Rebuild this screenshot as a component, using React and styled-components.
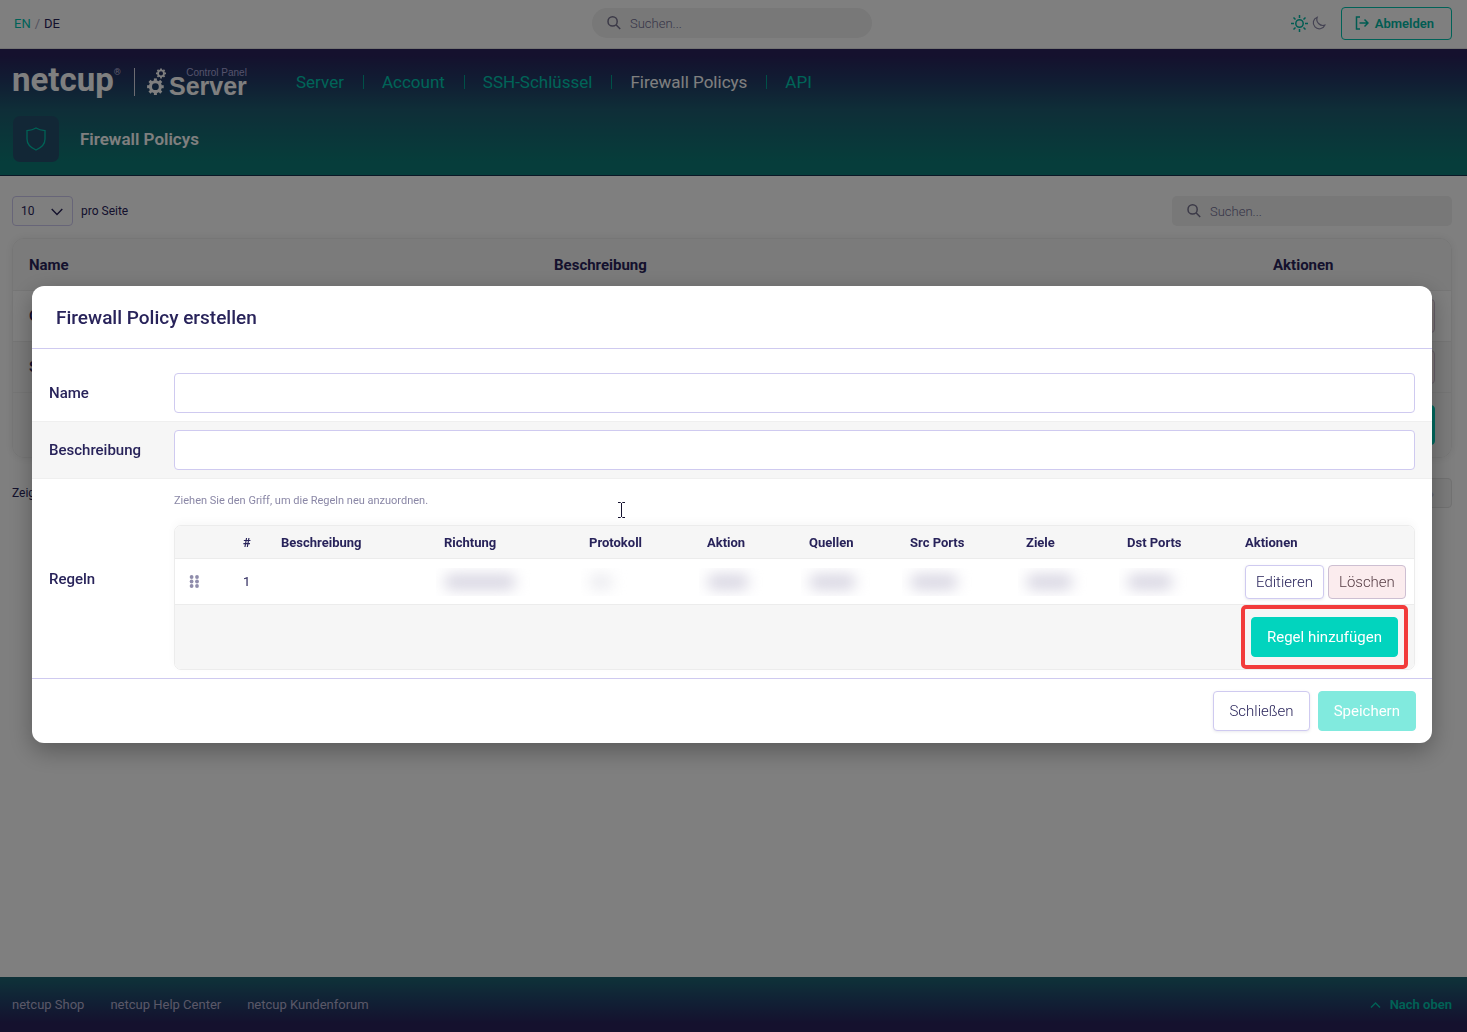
import React from 'react'
import styled, { createGlobalStyle } from 'styled-components'

const GlobalStyle = createGlobalStyle`
* { box-sizing: border-box; }

body {
  margin: 0;
  background: #fff;
  color: #28235a;
  font-family: Roboto, "Liberation Sans", sans-serif;
  font-size: 15px;
}

button, input, select { font-family: inherit; color: inherit; }
a { text-decoration: none; color: inherit; }
p, h1, h2 { margin: 0; }
`

const Page = styled.div`
  min-height: 100vh;
  display: flex;
  flex-direction: column;
`

const TopBar = styled.div`
  height: 49px;
  padding: 0 15px 2px 12px;
  border-bottom: 1px solid #e4e4e4;
  display: grid;
  grid-template-columns: 1fr 280px 1fr;
  align-items: center;
`

const Languages = styled.div`
  padding-left: 2px;
  display: flex;
  gap: 4px;
  font-size: 13px;
  color: #a6a3bd;
`

const Language = styled.a`
  color: ${props => props.$current ? '#28235a' : '#00c4b0'};
`

const SearchField = styled.label`
  width: 280px;
  height: 30px;
  padding: 0 15px;
  display: flex;
  align-items: center;
  gap: 9px;
  background: #f0f0f0;
  border-radius: ${props => props.$round ? '15px' : '5px'};
`

const SearchInput = styled.input`
  flex: 1;
  min-width: 0;
  padding: 0;
  border: 0;
  background: none;
  font-size: 13px;
  font-weight: 300;

  &::placeholder {
    color: #6f6b90;
    opacity: 1;
  }
`

const TopActions = styled.div`
  display: flex;
  justify-content: flex-end;
  align-items: center;
  gap: 4px;
`

const LogoutButton = styled.button`
  height: 33px;
  margin-left: 11px;
  padding: 0 17px 0 13px;
  display: flex;
  align-items: center;
  gap: 6px;
  background: none;
  border: 1px solid #00c4b0;
  border-radius: 4px;
  color: #00b8a5;
  font-size: 13px;
  font-weight: 600;
`

const Header = styled.header`
  height: 127px;
  padding: 0 12px;
  background: linear-gradient(#2a225c 5%, #223a66 25%, #1e5c70 48%, #0c7b76 90%);
  border-bottom: 1px solid #14304c;
`

const NavRow = styled.div`
  height: 66px;
  display: flex;
  align-items: center;
`

const Brand = styled.div`
  width: 265px;
  display: flex;
  align-items: center;
  color: #fff;
`

const BrandName = styled.span`
  width: 123px;
  height: 28px;
  border-right: 1px solid #d8d8e4;
  display: flex;
  font-size: 33px;
  line-height: 24px;
  font-weight: 700;

  sup {
    font-size: 9px;
    line-height: 8px;
    font-weight: 400;
    color: #b9b6dc;
  }
`

const Product = styled.span`
  margin-left: 12px;
  display: flex;
  align-items: center;
  font-family: "Liberation Sans", Arial, sans-serif;
`

const ProductText = styled.span`
  margin-left: 3px;
  display: flex;
  flex-direction: column;
  align-items: flex-end;
`

const ProductSmall = styled.span`
  font-size: 10px;
  line-height: 8px;
  color: #a9a6d8;
`

const ProductLarge = styled.span`
  font-size: 25px;
  line-height: 18px;
  font-weight: 700;
`

const Nav = styled.nav`
  display: flex;
  align-items: center;
`

const NavLink = styled.a`
  padding: 0 19px 0 18px;
  border-left: 1px solid ${props => props.$first ? 'transparent' : '#00a391'};
  line-height: 14px;
  font-size: 17px;
  color: ${props => props.$active ? '#fff' : '#00c9b0'};
`

const TitleRow = styled.div`
  display: flex;
  align-items: center;
  gap: 21px;
  margin-top: 1px;
  padding-left: 1px;
`

const TitleIcon = styled.div`
  width: 46px;
  height: 46px;
  border-radius: 7px;
  background: #244f6c;
  display: flex;
  align-items: center;
  justify-content: center;
`

const PageTitle = styled.h1`
  color: #fff;
  font-size: 17px;
  font-weight: 600;
`

const Main = styled.main`
  flex: 1;
  padding: 20px 15px 0 12px;
`

const Bar = styled.div`
  display: flex;
  align-items: center;
  justify-content: space-between;
  font-size: 12px;
`

const PageSize = styled.label`
  display: flex;
  align-items: center;
  gap: 8px;
`

const SelectBox = styled.span`
  position: relative;
  display: flex;

  svg {
    position: absolute;
    right: 10px;
    top: 12px;
    pointer-events: none;
  }
`

const Select = styled.select`
  appearance: none;
  width: 61px;
  height: 30px;
  padding: 0 8px;
  background: #fff;
  border: 1px solid #cfcaf0;
  border-radius: 4px;
  font-size: 12px;
`

const PolicyTable = styled.table`
  width: 100%;
  margin: 12px 0 20px;
  table-layout: fixed;
  border-collapse: separate;
  border-spacing: 0;
  border: 1px solid #ececec;
  border-radius: 12px;
  box-shadow: 0 0 10px rgba(0, 0, 0, 0.08);
  overflow: hidden;

  th, td {
    padding: 8px 16px;
    text-align: left;
    font-weight: 600;
    border-bottom: 1px solid #ececec;
  }
  th { height: 52px; font-weight: 700; }
  thead tr, tbody tr:nth-child(2n), tfoot tr { background: #f6f6f6; }
  tfoot td { padding: 12px 16px; border-bottom: 0; }
`

const Right = styled.div`
  display: flex;
  justify-content: flex-end;
`

const PagerButton = styled.button`
  width: 40px;
  height: 30px;
  background: #f6f6f6;
  border: 1px solid #e4e4e4;
  border-radius: 4px;
  color: #c8c6d6;
  font-size: 16px;
`

const Footer = styled.footer`
  height: 55px;
  padding: 0 15px 0 12px;
  display: flex;
  align-items: center;
  gap: 26px;
  background: linear-gradient(#1e6673, #22416a 45%, #2a225c 85%);
  color: #b4b0d0;
  font-size: 13px;
`

const TopLink = styled.a`
  margin-left: auto;
  display: flex;
  align-items: center;
  gap: 9px;
  color: #00c4ac;
  font-weight: 600;
`

const Backdrop = styled.div`
  position: fixed;
  inset: 0;
  padding: 0 35px 3px 32px;
  display: flex;
  align-items: center;
  background: rgba(0, 0, 0, 0.5);
`

const Modal = styled.section`
  flex: 1;
  background: #fff;
  border-radius: 12px;
  box-shadow: 0 8px 24px rgba(0, 0, 0, 0.3);
`

const ModalHeader = styled.div`
  height: 63px;
  padding: 0 24px;
  display: flex;
  align-items: center;
  border-bottom: 1px solid #cfcaf0;
`

const ModalTitle = styled.h2`
  font-size: 19px;
  font-weight: 500;
`

const Form = styled.form`
  margin-top: 16px;
`

const FormRow = styled.div`
  padding: 8px 17px;
  display: grid;
  grid-template-columns: 125px 1fr;
  align-items: center;
  background: ${props => props.$shaded ? '#f6f6f6' : '#fff'};
  border-bottom: ${props => props.$last ? '0' : '1px solid #efefef'};
`

const labelStyle = `
  font-size: 15px;
  font-weight: 500;
`

const Label = styled.label`${labelStyle}`
const GroupLabel = styled.span`${labelStyle}`

const Input = styled.input`
  width: 100%;
  height: 40px;
  padding: 0 12px;
  background: #fff;
  border: 1px solid #cfcaf0;
  border-radius: 4px;
  font-size: 15px;
`

const Hint = styled.p`
  margin-bottom: 10px;
  font-size: 11px;
  line-height: 28px;
  color: #8a87a6;
`

const RuleTable = styled.table`
  width: 100%;
  table-layout: fixed;
  border-collapse: separate;
  border-spacing: 0;
  border: 1px solid #ececec;
  border-radius: 7px;
  box-shadow: 0 -3px 8px rgba(0, 0, 0, 0.03);
  overflow: hidden;
  font-size: 13px;

  th, td {
    padding: 0 8px;
    text-align: left;
    border-bottom: 1px solid #ececec;
  }
  th { height: 33px; font-weight: 700; }
  td { height: 46px; }
  thead, tfoot { background: #f6f6f6; }
  tfoot td { height: 64px; padding: 0 6px; border-bottom: 0; }
`

const Handle = styled.svg`
  display: block;
  margin-left: 6px;
  fill: #8f8cab;
`

const Masked = styled.div`
  height: 28px;
  margin: 0 -8px;
  padding: 6px 8px;
  overflow: hidden;

  &::before {
    content: "";
    display: block;
    width: ${props => props.$width};
    height: 16px;
    border-radius: 8px;
    background: ${props => props.$faint ? '#ececf0' : '#d9d7e3'};
    filter: blur(7px);
  }
`

const RowActions = styled.div`
  display: flex;
  gap: 4px;
`

const Button = styled.button`
  flex: none;
  height: ${props => props.$small ? '34px' : '40px'};
  padding: 0 ${props => props.$small ? '10px' : '15px'};
  background: #fff;
  border: 1px solid #cfcaf0;
  border-radius: 4px;
  box-shadow: 0 1px 3px rgba(40, 35, 90, 0.1);
  font-size: 15px;
  font-weight: 300;
  color: #28235a;
`

const DangerButton = styled(Button)`
  background: #fbecee;
  border-color: #cdbfd2;
  box-shadow: none;
  color: #553c44;
`

const PrimaryButton = styled(Button)`
  background: #02d4be;
  border-color: #02d4be;
  box-shadow: none;
  color: #fff;
  font-weight: 400;

  &:disabled {
    background: #81eade;
    border-color: #81eade;
  }
`

const Highlight = styled.div`
  height: 64px;
  padding: 8px 6px;
  border: 4px solid #f23b3b;
  border-radius: 5px;
`

const ModalFooter = styled.div`
  padding: 12px 16px;
  display: flex;
  justify-content: flex-end;
  gap: 8px;
  border-top: 1px solid #cfcaf0;
`

const Pointer = styled.svg`
  position: absolute;
  left: 617px;
  top: 502px;
`

const SearchIcon = () => (
  <svg width="14" height="14" viewBox="0 0 14 14" fill="none" stroke="#77738f" strokeWidth="1.5">
    <circle cx="5.6" cy="5.4" r="4.6" />
    <path d="M9 8.8 L13.2 13" />
  </svg>
)

const Gear = ({ x, y, r }) => (
  <g transform={`translate(${x} ${y}) scale(${r})`} fill="none" stroke="#fff">
    <circle r="0.6" strokeWidth="0.38" />
    {[0, 45, 90, 135, 180, 225, 270, 315].map(angle => (
      <path key={angle} d="M0 -0.7 V-1" strokeWidth="0.36" transform={`rotate(${angle})`} />
    ))}
  </g>
)

const navItems = ['Server', 'Account', 'SSH-Schlüssel', 'Firewall Policys', 'API']
const footerLinks = ['netcup Shop', 'netcup Help Center', 'netcup Kundenforum']

const ruleColumns = [
  { title: '', width: 60 },
  { title: '#', width: 38 },
  { title: 'Beschreibung', width: 163 },
  { title: 'Richtung', width: 145 },
  { title: 'Protokoll', width: 118 },
  { title: 'Aktion', width: 102 },
  { title: 'Quellen', width: 101 },
  { title: 'Src Ports', width: 116 },
  { title: 'Ziele', width: 101 },
  { title: 'Dst Ports', width: 118 },
  { title: 'Aktionen', width: 177 },
]

const maskedWidths = ['72px', '24px', '42px', '47px', '48px', '47px', '46px']

const Background = () => (
  <Page>
    <TopBar>
      <Languages>
        <Language href="#en">EN</Language>/<Language href="#de" $current>DE</Language>
      </Languages>
      <SearchField $round>
        <SearchIcon />
        <SearchInput type="search" placeholder="Suchen..." aria-label="Suchen" />
      </SearchField>
      <TopActions>
        <svg width="17" height="17" viewBox="0 0 17 17" fill="none" stroke="#00b8a5" strokeWidth="1.5">
          <circle cx="8.5" cy="8.5" r="3.7" />
          <path d="M8.5 0v3M8.5 14v3M0 8.5h3M14 8.5h3M2.5 2.5l2 2M12.5 12.5l2 2M2.5 14.5l2-2M12.5 4.5l2-2" />
        </svg>
        <svg width="14" height="14" viewBox="0 0 14 14" fill="none" stroke="#8a87a6" strokeWidth="1.2">
          <path d="M5.2 1.2A6 6 0 1 0 12.8 9.2 6.2 6.2 0 0 1 5.2 1.2Z" />
        </svg>
        <LogoutButton type="button">
          <svg width="14" height="14" viewBox="0 0 14 14" fill="none" stroke="currentColor" strokeWidth="1.5">
            <path d="M5 1H1.5V13H5M4.5 7H13M9.5 3.5L13 7L9.5 10.5" />
          </svg>
          Abmelden
        </LogoutButton>
      </TopActions>
    </TopBar>

    <Header>
      <NavRow>
        <Brand>
          <BrandName>netcup<sup>®</sup></BrandName>
          <Product>
            <svg width="19" height="28" viewBox="0 0 19 28">
              <Gear x={8.4} y={18.7} r={8.3} />
              <Gear x={14} y={5.4} r={5} />
            </svg>
            <ProductText>
              <ProductSmall>Control Panel</ProductSmall>
              <ProductLarge>Server</ProductLarge>
            </ProductText>
          </Product>
        </Brand>
        <Nav>
          {navItems.map((item, i) => (
            <NavLink key={item} href="#nav" $first={i === 0} $active={item === 'Firewall Policys'}>
              {item}
            </NavLink>
          ))}
        </Nav>
      </NavRow>
      <TitleRow>
        <TitleIcon>
          <svg width="20" height="24" viewBox="0 0 20 24" fill="none" stroke="#00c4ac" strokeWidth="1.3">
            <path d="M10 1C7.6 2.6 4.6 3.4 1 3.6V12C1 17 4.4 20.6 10 23C15.6 20.6 19 17 19 12V3.6C15.4 3.4 12.4 2.6 10 1Z" />
          </svg>
        </TitleIcon>
        <PageTitle>Firewall Policys</PageTitle>
      </TitleRow>
    </Header>

    <Main>
      <Bar>
        <PageSize>
          <SelectBox>
            <Select defaultValue="10">
              <option>10</option>
            </Select>
            <svg width="12" height="8" viewBox="0 0 12 8" fill="none" stroke="#28235a" strokeWidth="1.4">
              <path d="M0.7 1L6 6.5L11.3 1" />
            </svg>
          </SelectBox>
          pro Seite
        </PageSize>
        <SearchField>
          <SearchIcon />
          <SearchInput type="search" placeholder="Suchen..." aria-label="Policys suchen" />
        </SearchField>
      </Bar>
      <PolicyTable>
        <colgroup>
          <col width="525" />
          <col width="719" />
          <col width="194" />
        </colgroup>
        <thead>
          <tr>
            <th>Name</th>
            <th>Beschreibung</th>
            <th>Aktionen</th>
          </tr>
        </thead>
        <tbody>
          {['O', 'S'].map(name => (
            <tr key={name}>
              <td>{name}</td>
              <td />
              <td><Right><DangerButton type="button" $small aria-label="Löschen" /></Right></td>
            </tr>
          ))}
        </tbody>
        <tfoot>
          <tr>
            <td colSpan="3"><Right><PrimaryButton type="button" aria-label="Erstellen" /></Right></td>
          </tr>
        </tfoot>
      </PolicyTable>
      <Bar>
        <span>Zeige</span>
        <PagerButton type="button" disabled>›</PagerButton>
      </Bar>
    </Main>

    <Footer>
      {footerLinks.map(link => <a key={link} href="#footer">{link}</a>)}
      <TopLink href="#top">
        <svg width="11" height="6" viewBox="0 0 11 6" fill="none" stroke="currentColor" strokeWidth="1.4">
          <path d="M1 5.5L5.5 1L10 5.5" />
        </svg>
        Nach oben
      </TopLink>
    </Footer>
  </Page>
)

const Rules = () => (
  <RuleTable>
    <colgroup>
      {ruleColumns.map(col => <col key={col.title} width={col.width} />)}
    </colgroup>
    <thead>
      <tr>{ruleColumns.map(col => <th key={col.title}>{col.title}</th>)}</tr>
    </thead>
    <tbody>
      <tr>
        <td>
          <Handle width="11" height="13" viewBox="0 0 11 13">
            {[2, 6.5, 11].map(y => (
              <g key={y}>
                <circle cx="2.6" cy={y} r="1.9" />
                <circle cx="8" cy={y} r="1.9" />
              </g>
            ))}
          </Handle>
        </td>
        <td>1</td>
        <td />
        {maskedWidths.map((width, i) => (
          <td key={i}><Masked $width={width} $faint={i === 1} /></td>
        ))}
        <td>
          <RowActions>
            <Button type="button" $small>Editieren</Button>
            <DangerButton type="button" $small>Löschen</DangerButton>
          </RowActions>
        </td>
      </tr>
    </tbody>
    <tfoot>
      <tr>
        <td colSpan="11">
          <Right>
            <Highlight>
              <PrimaryButton type="button">Regel hinzufügen</PrimaryButton>
            </Highlight>
          </Right>
        </td>
      </tr>
    </tfoot>
  </RuleTable>
)

const App = () => (
  <>
    <GlobalStyle />
    <Background />
    <Backdrop>
      <Modal role="dialog" aria-labelledby="dialog-title">
        <ModalHeader>
          <ModalTitle id="dialog-title">Firewall Policy erstellen</ModalTitle>
        </ModalHeader>
        <Form>
          <FormRow>
            <Label htmlFor="name">Name</Label>
            <Input id="name" type="text" />
          </FormRow>
          <FormRow $shaded>
            <Label htmlFor="description">Beschreibung</Label>
            <Input id="description" type="text" />
          </FormRow>
          <FormRow $last>
            <GroupLabel>Regeln</GroupLabel>
            <div>
              <Hint>Ziehen Sie den Griff, um die Regeln neu anzuordnen.</Hint>
              <Rules />
            </div>
          </FormRow>
          <ModalFooter>
            <Button type="button">Schließen</Button>
            <PrimaryButton type="submit" disabled>Speichern</PrimaryButton>
          </ModalFooter>
        </Form>
      </Modal>
      <Pointer width="9" height="16" viewBox="0 0 9 16" fill="none" stroke="#15122f">
        <path d="M1 0.5H3.5L4.5 1.5L5.5 0.5H8M4.5 1V15M1 15.5H3.5L4.5 14.5L5.5 15.5H8" />
      </Pointer>
    </Backdrop>
  </>
)

export default App
